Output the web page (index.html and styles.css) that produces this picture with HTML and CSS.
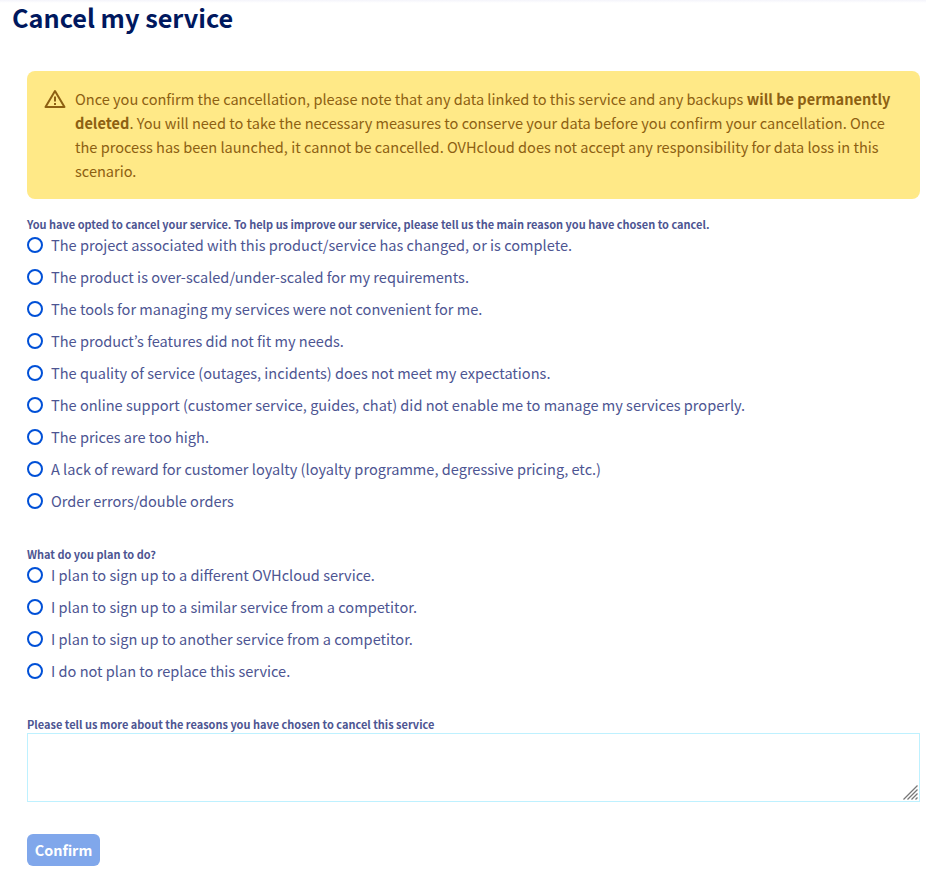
FILE: index.html
```html
<!DOCTYPE html>
<html lang="en">
<head>
<meta charset="utf-8">
<title>Cancel my service</title>
<link rel="stylesheet" href="styles.css">
</head>
<body>
<main class="page">
  <h1 class="title">Cancel my service</h1>
  <form class="form">
    <div class="alert">
      <svg class="alert-icon" viewBox="0 0 22 20" fill="none" stroke="currentColor" stroke-width="2" stroke-linejoin="round" aria-hidden="true">
        <path d="M11 2 20.500 18H1.500Z"/>
        <path d="M11 7.500v5M11 14v2"/>
      </svg>
      <p class="alert-text">Once you confirm the cancellation, please note that any data linked to this service and any backups <strong>will be permanently<br>deleted</strong>. You will need to take the necessary measures to conserve your data before you confirm your cancellation. Once<br>the process has been launched, it cannot be cancelled. OVHcloud does not accept any responsibility for data loss in this<br>scenario.</p>
    </div>
    <fieldset class="group">
      <legend class="label">You have opted to cancel your service. To help us improve our service, please tell us the main reason you have chosen to cancel.</legend>
      <label class="option"><input type="radio" name="reason"><span>The project associated with this product/service has changed, or is complete.</span></label>
      <label class="option"><input type="radio" name="reason"><span>The product is over-scaled/under-scaled for my requirements.</span></label>
      <label class="option"><input type="radio" name="reason"><span>The tools for managing my services were not convenient for me.</span></label>
      <label class="option"><input type="radio" name="reason"><span>The product’s features did not fit my needs.</span></label>
      <label class="option"><input type="radio" name="reason"><span>The quality of service (outages, incidents) does not meet my expectations.</span></label>
      <label class="option"><input type="radio" name="reason"><span>The online support (customer service, guides, chat) did not enable me to manage my services properly.</span></label>
      <label class="option"><input type="radio" name="reason"><span>The prices are too high.</span></label>
      <label class="option"><input type="radio" name="reason"><span>A lack of reward for customer loyalty (loyalty programme, degressive pricing, etc.)</span></label>
      <label class="option"><input type="radio" name="reason"><span>Order errors/double orders</span></label>
    </fieldset>
    <fieldset class="group">
      <legend class="label">What do you plan to do?</legend>
      <label class="option"><input type="radio" name="plan"><span>I plan to sign up to a different OVHcloud service.</span></label>
      <label class="option"><input type="radio" name="plan"><span>I plan to sign up to a similar service from a competitor.</span></label>
      <label class="option"><input type="radio" name="plan"><span>I plan to sign up to another service from a competitor.</span></label>
      <label class="option"><input type="radio" name="plan"><span>I do not plan to replace this service.</span></label>
    </fieldset>
    <label class="label" for="details">Please tell us more about the reasons you have chosen to cancel this service</label>
    <div class="details">
      <textarea id="details"></textarea>
      <svg class="grip" viewBox="0 0 15 15" stroke="#777" stroke-width="1.3" aria-hidden="true"><path d="M.5 14.500l14-14M4.500 14.500l10-10M8.500 14.500l6-6M12.500 14.500l2-2"/></svg>
    </div>
    <button class="confirm" type="submit" disabled>Confirm</button>
  </form>
</main>
</body>
</html>
```
FILE: styles.css
```css
* { box-sizing: border-box; }

body {
  margin: 0;
  height: 870px;
  overflow: hidden;
  background: linear-gradient(#f4f4fb, #fff 3px) no-repeat;
  color: #4d5592;
  font: 14.57px/24px "Noto Sans CJK KR", "Source Sans Pro", sans-serif;
  white-space: nowrap;
}

.page { padding: 1px 6px 0 12px; }

.title {
  margin: 0;
  height: 70px;
  color: #00185e;
  font-size: 25.25px;
  line-height: 32px;
  font-weight: 700;
}

.form { margin-left: 15px; }

.alert {
  display: flex;
  height: 128px;
  padding: 16px;
  margin-bottom: 18px;
  border-radius: 8px;
  background: #ffe987;
  color: #8d6012;
}

.alert-icon {
  flex: none;
  width: 22px;
  height: 20px;
  margin: 2px 9px 0 1px;
}

.alert-text { margin: 0; }

.group {
  margin: 0 0 26px;
  padding: 0;
  border: 0;
  min-width: 0;
}

.label {
  display: block;
  padding: 0;
  height: 16px;
  font-size: 10.97px;
  line-height: 14px;
  font-weight: 700;
}

.option {
  display: flex;
  gap: 8px;
  height: 24px;
  margin-bottom: 8px;
}

.option input {
  appearance: none;
  flex: none;
  width: 16px;
  height: 16px;
  margin: 4px 0 0;
  border: 2px solid #0050d7;
  border-radius: 50%;
  background: #fff;
}

.details {
  position: relative;
  height: 69px;
  margin-bottom: 32px;
}

.details textarea {
  display: block;
  width: 100%;
  height: 100%;
  border: 1px solid #bef1ff;
  background: #fff;
  resize: none;
}

.grip {
  position: absolute;
  right: 2px;
  bottom: 2px;
  width: 15px;
  height: 15px;
}

.confirm {
  display: block;
  width: 73px;
  height: 32px;
  padding: 0;
  border: 0;
  border-radius: 6px;
  background: #80a7eb;
  color: #fff;
  font: 700 14.4px/32px "Noto Sans CJK KR", "Source Sans Pro", sans-serif;
}
```
